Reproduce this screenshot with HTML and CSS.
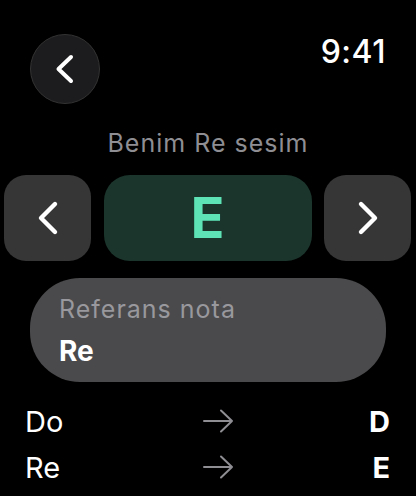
FILE: index.html
```html
<!DOCTYPE html>
<html>
<head>
    <title>Benim Re sesim</title>
    <link rel="stylesheet" href="styles.css">
</head>
<body>

    <div class="top-bar">
        <button class="back-btn" aria-label="Geri">
            <svg width="24" height="34" viewBox="0 0 24 34"><path d="M18 5 L5.5 17 L18 29" fill="none" stroke="#fff" stroke-width="4" stroke-linecap="round" stroke-linejoin="round"/></svg>
        </button>
        <div class="clock">9:41</div>
    </div>

    <div class="title">Benim Re sesim</div>

    <div class="stepper">
        <button class="step-btn" aria-label="Önceki">
            <svg width="24" height="36" viewBox="0 0 24 36"><path d="M19 4 L5 18 L19 32" fill="none" stroke="#fff" stroke-width="4.4" stroke-linecap="round" stroke-linejoin="round"/></svg>
        </button>
        <div class="note-box">E</div>
        <button class="step-btn" aria-label="Sonraki">
            <svg width="24" height="36" viewBox="0 0 24 36"><path d="M5 4 L19 18 L5 32" fill="none" stroke="#fff" stroke-width="4.4" stroke-linecap="round" stroke-linejoin="round"/></svg>
        </button>
    </div>

    <div class="ref-card">
        <div class="ref-label">Referans nota</div>
        <div class="ref-value">Re</div>
    </div>

    <div class="map-list">
        <div class="map-row">
            <span class="from">Do</span>
            <svg class="arrow" width="31" height="24" viewBox="0 0 31 24"><path d="M1 12 H29 M18 1.5 L29 12 L18 22.5" fill="none" stroke="#8e8e93" stroke-width="2" stroke-linecap="round" stroke-linejoin="round"/></svg>
            <span class="to">D</span>
        </div>
        <div class="map-row">
            <span class="from">Re</span>
            <svg class="arrow" width="31" height="24" viewBox="0 0 31 24"><path d="M1 12 H29 M18 1.5 L29 12 L18 22.5" fill="none" stroke="#8e8e93" stroke-width="2" stroke-linecap="round" stroke-linejoin="round"/></svg>
            <span class="to">E</span>
        </div>
    </div>

</body>
</html>
```

FILE: styles.css
```css
body {
    margin: 0;
    background: #000;
    color: #fff;
    font-family: Inter, "Noto Sans", sans-serif;
    width: 416px;
    height: 496px;
    overflow: hidden;
}

button {
    border: none;
    padding: 0;
    cursor: pointer;
    display: flex;
    align-items: center;
    justify-content: center;
}

.top-bar {
    display: flex;
    justify-content: space-between;
    align-items: flex-start;
    padding: 34px 30px 0 30px;
}

.back-btn {
    width: 70px;
    height: 70px;
    border-radius: 50%;
    background: #1c1c1e;
    border: 1.5px solid #333;
    box-sizing: border-box;
}

.clock {
    font-size: 32px;
    font-weight: 500;
    line-height: 36px;
    letter-spacing: 0.5px;
}

.title {
    text-align: center;
    color: #8e8e93;
    font-size: 25px;
    line-height: 30px;
    letter-spacing: 1px;
    margin-top: 24px;
}

.stepper {
    display: grid;
    grid-template-columns: 87px 208px 87px;
    column-gap: 12.5px;
    margin: 17px 0 0 4px;
    height: 86px;
}

.step-btn {
    background: #363636;
    border-radius: 22px;
}

.note-box {
    background: #1b352d;
    border-radius: 26px;
    display: flex;
    align-items: center;
    justify-content: center;
    color: #5de3b5;
    font-size: 56px;
    font-weight: 700;
}

.ref-card {
    margin: 17px 30px 0 30px;
    height: 104px;
    box-sizing: border-box;
    background: #4a4a4c;
    border-radius: 50px;
    padding: 14px 29px 0 29px;
}

.ref-label {
    color: #98989d;
    font-size: 25px;
    line-height: 34px;
    letter-spacing: 1px;
}

.ref-value {
    font-size: 28px;
    font-weight: 700;
    line-height: 38px;
    margin-top: 6px;
}

.map-list {
    margin-top: 16px;
    padding: 0 26px 0 25px;
}

.map-row {
    display: grid;
    grid-template-columns: 1fr auto 1fr;
    align-items: center;
    height: 46px;
    font-size: 29px;
}

.from {
    justify-self: start;
}

.arrow {
    display: block;
    margin-left: 21px;
}

.to {
    justify-self: end;
    font-weight: 700;
}
```
